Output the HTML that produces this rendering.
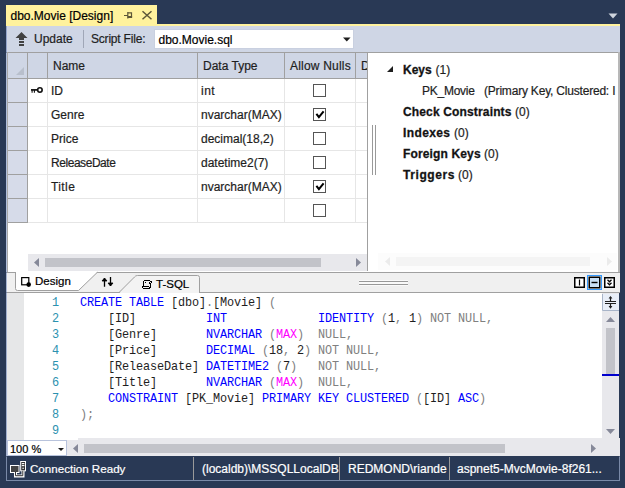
<!DOCTYPE html>
<html><head><meta charset="utf-8">
<style>
*{box-sizing:border-box;margin:0;padding:0}
html,body{width:625px;height:488px;overflow:hidden;background:#293955}
body{position:relative;font-family:"Liberation Sans",sans-serif;font-size:12px;color:#1e1e1e}
.a{position:absolute}
.t{position:absolute;font:12px/14px "Liberation Sans",sans-serif;white-space:pre;-webkit-text-stroke:0.2px currentColor}
.b{font-weight:bold;-webkit-text-stroke:0.3px #1e1e1e;color:#111}
.m{position:absolute;font:11.85px/16px "Liberation Mono",monospace;letter-spacing:-0.11px;white-space:pre}
.kw{color:#0000ff}.gr{color:#808080}.pk{color:#ff00ff}
.ln{position:absolute;font:11.85px/16px "Liberation Mono",monospace;color:#2b91af;text-align:right;width:20px;left:39px}
.cb{position:absolute;width:13px;height:13px;border:1px solid #555;background:#fff}
.hl{position:absolute;height:1px;background:#e6e6e6}
.vl{position:absolute;width:1px;background:#e6e6e6}
</style></head><body>

<!-- document tab -->
<div class="a" style="left:6px;top:5px;width:151px;height:21px;background:#fff29d"></div>
<div class="a" style="left:6px;top:24px;width:614px;height:2px;background:#fff29d"></div>
<div class="t" style="left:10.5px;top:9px;color:#000">dbo.Movie [Design]</div>
<svg class="a" style="left:122px;top:10px" width="12" height="10" viewBox="0 0 12 10">
  <path d="M2 5.5H5.5M5.8 2V8.5M5.8 2.9H9.5V7.4" stroke="#5c5638" stroke-width="1.2" fill="none"/>
  <rect x="5.8" y="6" width="4.3" height="2" fill="#5c5638"/>
</svg>
<svg class="a" style="left:141px;top:10px" width="12" height="10" viewBox="0 0 12 10">
  <path d="M1.5 1.2L10.5 9.2M10.5 1.2L1.5 9.2" stroke="#5c5638" stroke-width="1.5" fill="none"/>
</svg>
<!-- top right dropdown -->
<svg class="a" style="left:608px;top:13px" width="10" height="6"><path d="M0.5 0.5H9.5L5 5.5Z" fill="#ced4dd"/></svg>

<!-- toolbar -->
<div class="a" style="left:6px;top:26px;width:614px;height:26px;background:#cfd6e5"></div>
<svg class="a" style="left:15px;top:31px" width="13" height="16" viewBox="0 0 13 16">
  <path d="M6.5 1L12.5 7H9V9H4V7H0.5Z" fill="#424242"/>
  <rect x="4" y="10" width="5" height="2" fill="#424242"/>
  <rect x="4" y="13" width="5" height="2" fill="#424242"/>
</svg>
<div class="t" style="left:34px;top:32px;color:#1e1e1e">Update</div>
<div class="a" style="left:83px;top:30px;width:1px;height:18px;background:#a0a7b7"></div>
<div class="t" style="left:91px;top:32px;letter-spacing:-0.2px">Script File:</div>
<div class="a" style="left:154px;top:29px;width:200px;height:20px;background:#fff;border:1px solid #c9d0e0"></div>
<div class="t" style="left:158.5px;top:33px;color:#000">dbo.Movie.sql</div>
<svg class="a" style="left:343px;top:37px" width="8" height="5"><path d="M0 0.5H7.5L3.75 4.5Z" fill="#1e1e1e"/></svg>

<!-- grid -->
<div class="a" style="left:6px;top:52px;width:362px;height:220px;background:#fff"></div>
<div class="a" style="left:6px;top:52px;width:362px;height:1px;background:#a0a0a0"></div>
<div class="a" style="left:7px;top:52px;width:1px;height:220px;background:#a8a8a8"></div>
<div class="a" style="left:367px;top:52px;width:1px;height:219px;background:#a0a0a0"></div>
<!-- header -->
<div class="a" style="left:8px;top:53px;width:359px;height:25px;background:#cfd6e5"></div>
<div class="a" style="left:8px;top:78px;width:359px;height:1px;background:#a0a0a0"></div>
<div class="a" style="left:27px;top:53px;width:1px;height:25px;background:#a0a0a0"></div>
<div class="a" style="left:47px;top:53px;width:1px;height:25px;background:#a0a0a0"></div>
<div class="a" style="left:197px;top:53px;width:1px;height:25px;background:#a0a0a0"></div>
<div class="a" style="left:284px;top:53px;width:1px;height:25px;background:#a0a0a0"></div>
<div class="a" style="left:355px;top:53px;width:1px;height:25px;background:#a0a0a0"></div>
<svg class="a" style="left:16px;top:67px" width="9" height="9"><path d="M8 0V8H0Z" fill="#b8bfcc"/></svg>
<div class="t" style="left:53px;top:59px">Name</div>
<div class="t" style="left:203px;top:59px">Data Type</div>
<div class="t" style="left:290px;top:59px;letter-spacing:0.2px">Allow Nulls</div>
<div class="t" style="left:361px;top:59px;width:6px;overflow:hidden">D</div>
<!-- row selector column -->
<div class="a" style="left:8px;top:79px;width:19px;height:144px;background:#d6dbe9"></div>
<div class="a" style="left:27px;top:79px;width:1px;height:144px;background:#a0a0a0"></div>
<div class="a" style="left:8px;top:102px;width:19px;height:1px;background:#a0a0a0"></div>
<div class="a" style="left:8px;top:126px;width:19px;height:1px;background:#a0a0a0"></div>
<div class="a" style="left:8px;top:150px;width:19px;height:1px;background:#a0a0a0"></div>
<div class="a" style="left:8px;top:174px;width:19px;height:1px;background:#a0a0a0"></div>
<div class="a" style="left:8px;top:198px;width:19px;height:1px;background:#a0a0a0"></div>
<div class="a" style="left:8px;top:222px;width:19px;height:1px;background:#a0a0a0"></div>
<!-- data lines -->
<div class="hl" style="left:28px;top:102px;width:339px"></div>
<div class="hl" style="left:28px;top:126px;width:339px"></div>
<div class="hl" style="left:28px;top:150px;width:339px"></div>
<div class="hl" style="left:28px;top:174px;width:339px"></div>
<div class="hl" style="left:28px;top:198px;width:339px"></div>
<div class="hl" style="left:28px;top:222px;width:339px"></div>
<div class="vl" style="left:47px;top:79px;height:144px"></div>
<div class="vl" style="left:197px;top:79px;height:144px"></div>
<div class="vl" style="left:284px;top:79px;height:144px"></div>
<div class="vl" style="left:355px;top:79px;height:144px"></div>
<!-- key icon -->
<svg class="a" style="left:30px;top:86px" width="14" height="8" viewBox="0 0 14 8">
  <circle cx="9.9" cy="4" r="2.25" stroke="#111" stroke-width="1.6" fill="none"/>
  <path d="M1 3.9H7.8" stroke="#111" stroke-width="1.7"/>
  <path d="M2.1 4V6.8M4.4 4V6.8" stroke="#111" stroke-width="1.1"/>
</svg>
<div class="t" style="left:51px;top:84px">ID</div>
<div class="t" style="left:51px;top:108px">Genre</div>
<div class="t" style="left:51px;top:132px">Price</div>
<div class="t" style="left:51px;top:156px;letter-spacing:-0.45px">ReleaseDate</div>
<div class="t" style="left:51px;top:180px;letter-spacing:0.4px">Title</div>
<div class="t" style="left:201px;top:84px;letter-spacing:0.5px">int</div>
<div class="t" style="left:201px;top:108px">nvarchar(MAX)</div>
<div class="t" style="left:201px;top:132px">decimal(18,2)</div>
<div class="t" style="left:201px;top:156px">datetime2(7)</div>
<div class="t" style="left:201px;top:180px">nvarchar(MAX)</div>
<div class="cb" style="left:313px;top:84px"></div>
<div class="cb" style="left:313px;top:108px"><svg class="a" style="left:1px;top:1px" width="10" height="10"><path d="M1.4 3.9L3.9 7.2L8.6 1.3" stroke="#000" stroke-width="2" fill="none"/></svg></div>
<div class="cb" style="left:313px;top:132px"></div>
<div class="cb" style="left:313px;top:156px"></div>
<div class="cb" style="left:313px;top:180px"><svg class="a" style="left:1px;top:1px" width="10" height="10"><path d="M1.4 3.9L3.9 7.2L8.6 1.3" stroke="#000" stroke-width="2" fill="none"/></svg></div>
<div class="cb" style="left:313px;top:204px"></div>
<!-- grid hscroll -->
<div class="a" style="left:28px;top:254px;width:339px;height:17px;background:#e8e8ec"></div>
<svg class="a" style="left:34px;top:258px" width="6" height="9"><path d="M5 0V9L0 4.5Z" fill="#868999"/></svg>
<div class="a" style="left:45px;top:258px;width:276px;height:9px;background:#c2c3c9"></div>
<svg class="a" style="left:356px;top:258px" width="6" height="9"><path d="M0 0V9L5 4.5Z" fill="#868999"/></svg>

<!-- right pane -->
<div class="a" style="left:368px;top:52px;width:252px;height:220px;background:#fff"></div>
<div class="a" style="left:368px;top:52px;width:252px;height:1px;background:#a0a0a0"></div>
<div class="a" style="left:618px;top:52px;width:2px;height:220px;background:#b8b8b8"></div>
<div class="a" style="left:372px;top:125px;width:1px;height:50px;background:#999"></div>
<div class="a" style="left:375px;top:125px;width:1px;height:50px;background:#999"></div>
<svg class="a" style="left:387px;top:66px" width="7" height="7"><path d="M6 0V6H0Z" fill="#1e1e1e"/></svg>
<div class="t b" style="left:403px;top:63px">Keys</div><div class="t" style="left:435.5px;top:63px">(1)</div>
<div class="t" style="left:422px;top:84px;letter-spacing:-0.25px">PK_Movie</div>
<div class="t" style="left:484px;top:84px;width:133px;overflow:hidden;letter-spacing:-0.2px">(Primary Key, Clustered: I</div>
<div class="t b" style="left:403px;top:105px;letter-spacing:0.15px">Check Constraints</div><div class="t" style="left:515px;top:105px">(0)</div>
<div class="t b" style="left:403px;top:126px;letter-spacing:0.38px">Indexes</div><div class="t" style="left:454px;top:126px">(0)</div>
<div class="t b" style="left:403px;top:147px;letter-spacing:0.14px">Foreign Keys</div><div class="t" style="left:484px;top:147px">(0)</div>
<div class="t b" style="left:403px;top:168px;letter-spacing:0.57px">Triggers</div><div class="t" style="left:458px;top:168px">(0)</div>
<div class="a" style="left:378px;top:253px;width:239px;height:17px;background:#fcfcfc"></div>
<svg class="a" style="left:385px;top:257px" width="6" height="9"><path d="M5 0V9L0 4.5Z" fill="#ebebeb"/></svg>
<div class="a" style="left:396px;top:257px;width:194px;height:9px;background:#f4f4f4"></div>
<svg class="a" style="left:607px;top:257px" width="6" height="9"><path d="M0 0V9L5 4.5Z" fill="#ebebeb"/></svg>

<!-- bottom tab strip -->
<svg class="a" style="left:6px;top:271px" width="614" height="23" viewBox="0 0 614 23">
  <rect x="0" y="1" width="614" height="21" fill="#f0f0f0"/>
  <path d="M0 1.5H614M0 21.5H614" stroke="#a0a0a0" stroke-width="1"/>
  <path d="M9.5 0V17.5Q9.5 19.5 11.5 19.5H72.5L91.5 0.8V0Z" fill="#fff"/>
  <path d="M9.5 1V17.5Q9.5 19.5 11.5 19.5H72.5L91.5 1.2" fill="none" stroke="#a0a0a0"/>
  <path d="M112.5 23L128.5 6Q129.5 4.5 131.5 4.5H191.5Q193.5 4.5 193.5 6.5V23Z" fill="#f3f3f3"/>
  <path d="M112.5 22L128.5 6Q129.5 4.5 131.5 4.5H191.5Q193.5 4.5 193.5 6.5V22" fill="none" stroke="#a0a0a0"/>
</svg>
<svg class="a" style="left:20px;top:276px" width="12" height="12" viewBox="0 0 12 12">
  <rect x="1.7" y="1.6" width="7.1" height="7.2" fill="#fff" stroke="#000" stroke-width="1.2"/>
  <circle cx="8.7" cy="8.6" r="2.3" fill="#000"/>
</svg>
<div class="t" style="left:35px;top:274px;color:#000;font-size:11.5px">Design</div>
<svg class="a" style="left:100px;top:276px" width="16" height="12" viewBox="0 0 16 12">
  <path d="M4.5 2.5V10.8M10.5 1V10" stroke="#000" stroke-width="1.3" fill="none"/>
  <path d="M2 5L4.5 2L7 5Z M8 7L10.5 10L13 7Z" fill="#000" stroke="#000" stroke-width="0.8"/>
</svg>
<svg class="a" style="left:142px;top:280px" width="10" height="9" viewBox="0 0 10 9" shape-rendering="crispEdges"><path d="M2 0h6v1h-6zM1 1h1v1h-1zM8 1h2v1h-2zM1 2h1v1h-1zM3 2h1v1h-1zM7 2h1v1h-1zM9 2h1v1h-1zM1 3h1v1h-1zM7 3h2v1h-2zM1 4h1v1h-1zM8 4h1v1h-1zM1 5h1v1h-1zM8 5h1v1h-1zM0 6h7v1h-7zM8 6h1v1h-1zM0 7h1v1h-1zM7 7h2v1h-2zM1 8h7v1h-7z" fill="#000"/></svg>
<div class="t" style="left:156px;top:277px;color:#000;font-size:11.5px">T-SQL</div>
<div class="a" style="left:359px;top:280px;width:49px;height:6px;background:#fafafa"></div>
<div class="a" style="left:359px;top:281px;width:49px;height:1px;background:#999"></div>
<div class="a" style="left:359px;top:284px;width:49px;height:1px;background:#999"></div>
<!-- split buttons -->
<svg class="a" style="left:572px;top:273px" width="47" height="18" viewBox="0 0 47 18">
  <rect x="2.75" y="4.75" width="9.5" height="9.5" fill="#fff" stroke="#000" stroke-width="1.5"/>
  <path d="M7.5 6.5V12.5" stroke="#000" stroke-width="1.2"/>
  <rect x="15.5" y="2.5" width="14" height="14" fill="none" stroke="#3399ff" stroke-width="1"/>
  <rect x="17.25" y="4.25" width="10.5" height="10.5" fill="#c9e0f7" stroke="#000" stroke-width="1.5"/>
  <path d="M19.5 9.5H25.5" stroke="#000" stroke-width="1.4"/>
  <rect x="32.75" y="4.75" width="9.5" height="9.5" fill="#fff" stroke="#000" stroke-width="1.5"/>
  <path d="M35.5 6.8L37.5 8.8L39.5 6.8M35.5 9.8L37.5 11.8L39.5 9.8" stroke="#000" stroke-width="1.3" fill="none"/>
</svg>

<!-- editor -->
<div class="a" style="left:6px;top:293px;width:596px;height:145px;background:#fff"></div>
<div class="a" style="left:6px;top:293px;width:18px;height:145px;background:#e6e7e8"></div>
<div class="ln" style="top:295px">1</div>
<div class="ln" style="top:311px">2</div>
<div class="ln" style="top:327px">3</div>
<div class="ln" style="top:343px">4</div>
<div class="ln" style="top:359px">5</div>
<div class="ln" style="top:375px">6</div>
<div class="ln" style="top:391px">7</div>
<div class="ln" style="top:407px">8</div>
<div class="ln" style="top:423px">9</div>
<div class="m" style="left:80px;top:295px"><span class="kw">CREATE TABLE</span> [dbo]<span class="gr">.</span>[Movie] <span class="gr">(</span>
    [ID]          <span class="kw">INT</span>             <span class="kw">IDENTITY</span> <span class="gr">(</span>1<span class="gr">,</span> 1<span class="gr">)</span> <span class="gr">NOT NULL,</span>
    [Genre]       <span class="kw">NVARCHAR</span> <span class="gr">(</span><span class="pk">MAX</span><span class="gr">)</span>  <span class="gr">NULL,</span>
    [Price]       <span class="kw">DECIMAL</span> <span class="gr">(</span>18<span class="gr">,</span> 2<span class="gr">)</span> <span class="gr">NOT NULL,</span>
    [ReleaseDate] <span class="kw">DATETIME2</span> <span class="gr">(</span>7<span class="gr">)</span>   <span class="gr">NOT NULL,</span>
    [Title]       <span class="kw">NVARCHAR</span> <span class="gr">(</span><span class="pk">MAX</span><span class="gr">)</span>  <span class="gr">NULL,</span>
    <span class="kw">CONSTRAINT</span> [PK_Movie] <span class="kw">PRIMARY KEY CLUSTERED</span> <span class="gr">(</span>[ID] <span class="kw">ASC</span><span class="gr">)</span>
<span class="gr">);</span>
</div>
<!-- editor vscroll -->
<div class="a" style="left:602px;top:293px;width:17px;height:145px;background:#e8e8ec"></div>
<svg class="a" style="left:602px;top:293px" width="17" height="18" viewBox="0 0 17 18">
  <rect x="0" y="1" width="17" height="17" fill="#e8eef8"/>
  <path d="M0.5 1V17.5H17" stroke="#a8b4c8" fill="none"/>
  <path d="M3 8.5H14M3 10.5H14" stroke="#1e1e1e" stroke-width="1.2"/>
  <path d="M8.5 4V8M8.5 11V14.5" stroke="#1e1e1e" stroke-width="1.2"/>
  <path d="M6.6 5.6L8.5 3L10.4 5.6ZM6.6 13L8.5 15.8L10.4 13Z" fill="#1e1e1e"/>
</svg>
<svg class="a" style="left:606px;top:317px" width="9" height="5"><path d="M0 5H9L4.5 0Z" fill="#868999"/></svg>
<div class="a" style="left:606px;top:328px;width:9px;height:46px;background:#c2c3c9"></div>
<div class="a" style="left:602px;top:374px;width:17px;height:2px;background:#0000cd"></div>
<svg class="a" style="left:606px;top:429px" width="9" height="5"><path d="M0 0H9L4.5 5Z" fill="#868999"/></svg>

<!-- bottom zoom / hscroll -->
<div class="a" style="left:6px;top:438px;width:614px;height:18px;background:#e8e8ec"></div>
<div class="a" style="left:24px;top:438px;width:54px;height:2px;background:#fff"></div><div class="a" style="left:6px;top:438px;width:18px;height:2px;background:#e6e7e8"></div>
<div class="a" style="left:7px;top:440px;width:60px;height:16px;background:#fff;border:1px solid #b8c3dc"></div>
<div class="t" style="left:10px;top:442px;color:#000;font-size:11px">100 %</div>
<svg class="a" style="left:58px;top:448px" width="6" height="3"><path d="M0 0H6L3 3Z" fill="#1e1e1e"/></svg>
<svg class="a" style="left:73px;top:444px" width="6" height="9"><path d="M5 0V9L0 4.5Z" fill="#868999"/></svg>
<div class="a" style="left:84px;top:444px;width:421px;height:9px;background:#c2c3c9"></div>
<svg class="a" style="left:591px;top:444px" width="6" height="9"><path d="M0 0V9L5 4.5Z" fill="#868999"/></svg>

<!-- status bar -->
<div class="a" style="left:6px;top:456px;width:614px;height:25px;border:1px solid #7a8aa8;border-top-color:#293955;background:#293955"></div>
<div class="a" style="left:193px;top:457px;width:1px;height:23px;background:#9a9a9a"></div>
<div class="a" style="left:339px;top:457px;width:1px;height:23px;background:#9a9a9a"></div>
<div class="a" style="left:449px;top:457px;width:1px;height:23px;background:#9a9a9a"></div>
<svg class="a" style="left:9px;top:460px" width="18" height="18" viewBox="0 0 18 18">
  <path d="M6.5 12.5V16H14V10.5" stroke="#fff" stroke-width="3" fill="none"/>
  <rect x="1" y="5" width="9.5" height="8" fill="#fff"/>
  <rect x="2" y="6" width="7.5" height="6" fill="#444"/>
  <rect x="11.2" y="1" width="5.8" height="10.3" fill="#fff"/>
  <rect x="12.2" y="2" width="3.8" height="8.3" fill="#333"/>
  <rect x="12.8" y="3" width="2.6" height="1.2" fill="#fff"/>
  <rect x="12.8" y="5" width="2.6" height="1.2" fill="#fff"/>
  <circle cx="14.1" cy="8.2" r="0.8" fill="#fff"/>
  <path d="M6.5 12V15.7H13.8V10.8" stroke="#333" stroke-width="1" fill="none"/>
</svg>
<div class="t" style="left:30px;top:462px;color:#fff;font-size:11.6px">Connection Ready</div>
<div class="t" style="left:202px;top:462px;color:#fff">(localdb)\MSSQLLocalDB</div>
<div class="t" style="left:348px;top:462px;color:#fff">REDMOND\riande</div>
<div class="t" style="left:457px;top:462px;color:#fff">aspnet5-MvcMovie-8f261...</div>
<div class="a" style="left:6px;top:26px;width:1px;height:430px;background:rgba(70,100,170,0.42)"></div>
</body></html>
